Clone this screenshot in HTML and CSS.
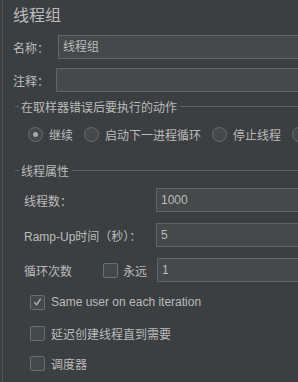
FILE: index.html
```html
<!DOCTYPE html>
<html>
<head>
<meta charset="utf-8">
<link rel="stylesheet" href="styles.css">
</head>
<body>
<div class="panel">
  <div class="title">线程组</div>
  <div class="row row-name">
    <span class="label">名称：</span>
    <div class="input name-input">线程组</div>
  </div>
  <div class="row row-comment">
    <span class="label">注释：</span>
    <div class="input comment-input"></div>
  </div>
  <div class="legend legend-1"><span class="dash"></span><span class="legend-text">在取样器错误后要执行的动作</span><span class="line"></span></div>
  <div class="radios">
    <span class="radio checked"></span><span class="rtext">继续</span>
    <span class="radio"></span><span class="rtext">启动下一进程循环</span>
    <span class="radio"></span><span class="rtext">停止线程</span>
    <span class="radio"></span>
  </div>
  <div class="legend legend-2"><span class="dash"></span><span class="legend-text">线程属性</span><span class="line"></span></div>
  <div class="field f1">
    <span class="flabel">线程数：</span>
    <div class="input">1000</div>
  </div>
  <div class="field f2">
    <span class="flabel">Ramp-Up时间（秒）：</span>
    <div class="input">5</div>
  </div>
  <div class="field f3">
    <span class="flabel loop">循环次数</span>
    <span class="box"></span><span class="forever">永远</span>
    <div class="input">1</div>
  </div>
  <div class="check c1"><span class="box checked"><svg width="14" height="14" viewBox="0 0 14 14"><path d="M3.5 7.2 L6 10 L10.5 3.5" fill="none" stroke="#a9a9a9" stroke-width="1.6"/></svg></span><span class="ctext">Same user on each iteration</span></div>
  <div class="check c2"><span class="box"></span><span class="ctext">延迟创建线程直到需要</span></div>
  <div class="check c3"><span class="box"></span><span class="ctext">调度器</span></div>
</div>
</body>
</html>
```
FILE: styles.css
```css
html, body {
  margin: 0;
  padding: 0;
  background: #3c3f41;
  overflow: hidden;
}
body {
  width: 298px;
  height: 382px;
  font-family: "Liberation Sans", "Noto Sans CJK SC", sans-serif;
  font-size: 12px;
  color: #bbbbbb;
}
.panel {
  margin-left: 2px;
  border-left: 1px solid #55585a;
  height: 382px;
  box-sizing: border-box;
  padding-left: 10px;
  display: flex;
  flex-direction: column;
  width: 330px;
}
.title {
  font-size: 16px;
  height: 24px;
  line-height: 24px;
  margin-top: 4px;
}
.row {
  display: flex;
  align-items: center;
  height: 24px;
}
.row-name { margin-top: 7px; }
.row-comment { margin-top: 9px; }
.label { width: 45px; flex: none; }
.row-comment .label { width: 43px; }
.input {
  flex: 1;
  height: 24px;
  box-sizing: border-box;
  background: #45494a;
  border: 1px solid #646464;
  line-height: 22px;
  padding-left: 4px;
}
.legend {
  display: flex;
  align-items: center;
  height: 16px;
  margin-left: 2px;
}
.legend-1 { margin-top: 6px; }
.legend-2 { margin-top: 20px; }
.dash { width: 4px; height: 1px; background: #5e6163; flex: none; }
.line { flex: 1; height: 1px; background: #5e6163; margin-left: 3px; }
.legend-text { margin-left: 2px; white-space: nowrap; }
.radios {
  display: flex;
  align-items: center;
  height: 16px;
  margin-top: 12px;
  margin-left: 15px;
  white-space: nowrap;
}
.radio {
  width: 15px;
  height: 15px;
  box-sizing: border-box;
  border: 1px solid #6b6e70;
  border-radius: 50%;
  background: #43494a;
  flex: none;
  display: flex;
  align-items: center;
  justify-content: center;
}
.radio.checked::after {
  content: "";
  width: 5px;
  height: 5px;
  border-radius: 50%;
  background: #a9a9a9;
}
.rtext { margin-left: 6px; margin-right: 11px; }
.field {
  display: flex;
  align-items: center;
  height: 24px;
  margin-left: 11px;
}
.f1 { margin-top: 10px; }
.f2 { margin-top: 11px; }
.f3 { margin-top: 11px; }
.flabel { width: 132px; flex: none; }
.flabel.loop { width: 79px; }
.box {
  width: 15px;
  height: 15px;
  box-sizing: border-box;
  border: 1px solid #6b6e70;
  border-radius: 2px;
  background: #43494a;
  flex: none;
  display: flex;
  align-items: center;
  justify-content: center;
}
.forever { width: 34px; margin-left: 5px; flex: none; }
.check {
  display: flex;
  align-items: center;
  height: 16px;
  margin-left: 17px;
}
.c1 { margin-top: 12px; }
.c2 { margin-top: 15px; }
.c3 { margin-top: 14px; }
.ctext { margin-left: 6px; white-space: nowrap; }
```
